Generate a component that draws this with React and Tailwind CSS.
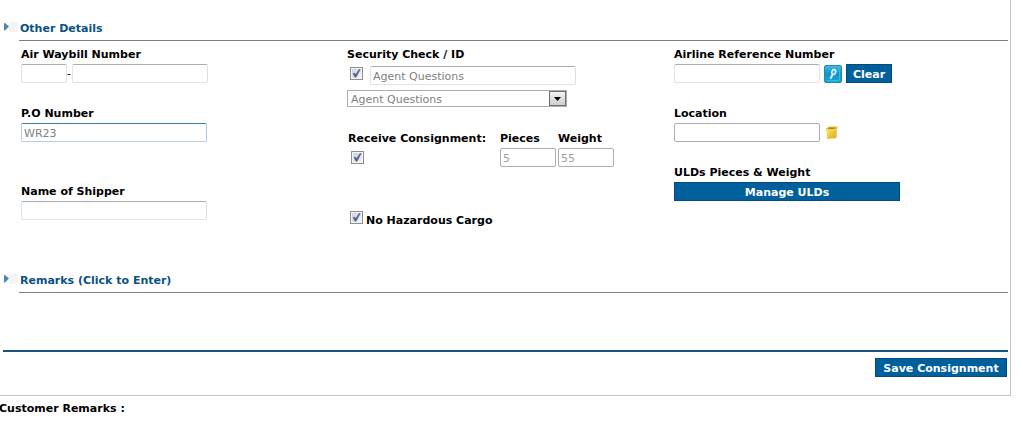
import { useState } from 'react';
import clsx from 'clsx';

function SectionHeading({ children }) {
  return (
    <h2 className="ml-[3px] mr-[2px]">
      <button type="button" className="flex w-full items-stretch text-left font-bold text-[#0b5184]">
        <span className="w-4 shrink-0 pt-[6px]">
          <svg width="16" height="10" viewBox="0 0 16 10" aria-hidden="true">
            <path d="M6 0h9v10H6z" fill="#f4f4f4" />
            <path d="M1 1h1l4 3.500-4 4H1z" fill="#4a8ab0" />
          </svg>
        </span>
        <span className="flex h-[25px] grow items-center border-b border-[#808080] pt-[2px] pl-px">{children}</span>
      </button>
    </h2>
  );
}

function TextInput({ dark, focused, className, ...props }) {
  return (
    <input
      type="text"
      className={clsx(
        'h-[19px] rounded-[2px] border bg-white px-[2px] pt-[2px] outline-none',
        dark && 'border-[#abadb3]',
        focused && 'border-[#b5cfe7] border-t-[#3d7bad] border-r-[#a4c9e3]',
        !dark && !focused && 'border-[#e2e3ea] border-t-[#abadb3] border-r-[#dbdfe6]',
        className
      )}
      {...props}
    />
  );
}

function Checkbox({ className, ...props }) {
  const [checked, setChecked] = useState(true);

  return (
    <span className={clsx('relative block h-[13px] w-[13px] shrink-0', className)}>
      <input
        type="checkbox"
        checked={checked}
        onChange={(e) => setChecked(e.target.checked)}
        className="block h-[13px] w-[13px] appearance-none border border-[#8e8f8f] bg-linear-to-br from-[#cbcfd5] to-[#f6f6f6] shadow-[inset_0_0_0_1px_#f4f4f4]"
        {...props}
      />
      {checked ? (
        <svg className="pointer-events-none absolute inset-0" width="13" height="13" viewBox="0 0 13 13" aria-hidden="true">
          <path d="M3 6.5 4.5 6l1 1.8L9 2.5h1.2L6 10.3H5z" fill="#4a5f97" stroke="#4a5f97" strokeWidth="0.5" />
        </svg>
      ) : null}
    </span>
  );
}

function Button({ className, children }) {
  return (
    <button
      type="button"
      className={clsx('flex h-[19px] items-center justify-center border border-[#004b84] bg-[#00609c] pt-[2px] font-bold text-white', className)}
    >
      {children}
    </button>
  );
}

function SearchIcon() {
  return (
    <svg width="18" height="18" viewBox="0 0 18 18" aria-hidden="true">
      <defs>
        <linearGradient id="search-bg" x1="0" y1="0" x2="0" y2="1">
          <stop offset="0" stopColor="#45bce0" />
          <stop offset="0.5" stopColor="#1293c6" />
          <stop offset="1" stopColor="#18a9d8" />
        </linearGradient>
      </defs>
      <rect x="0.5" y="0.5" width="17" height="17" rx="1.5" fill="url(#search-bg)" stroke="#2389b3" />
      <path d="M3 15.5h12M15.5 4v11" stroke="#43c5e8" strokeWidth="1" opacity="0.7" />
      <ellipse cx="9.800" cy="7" rx="2" ry="2.500" transform="rotate(20 9.800 7)" fill="#55b5d8" stroke="#e4f6fc" strokeWidth="1.300" />
      <path d="M8.300 10 6.800 13" stroke="#d5effa" strokeWidth="2" strokeLinecap="round" />
    </svg>
  );
}

function BoxIcon() {
  return (
    <svg width="12" height="13" viewBox="0 0 12 13" aria-hidden="true">
      <defs>
        <linearGradient id="box-front" x1="0" y1="0" x2="1" y2="1">
          <stop offset="0" stopColor="#f9df5c" />
          <stop offset="1" stopColor="#e0ac14" />
        </linearGradient>
      </defs>
      <path d="M0 2.5 3 .5h7L12 1v1l-2 2H1z" fill="#e6c63a" />
      <path d="M3 1.5h6.500L8.500 3H2z" fill="#a9851a" />
      <path d="M1 4h8.500v8.200L1 13z" fill="url(#box-front)" />
      <path d="M9.500 4 10.500 3v8.500l-1 .7z" fill="#cf9c12" />
      <path d="M0 3h9.500v1.500H.5z" fill="#f3d64a" />
    </svg>
  );
}

export default function App() {
  return (
    <div className="overflow-x-hidden bg-white font-['DejaVu_Sans',Verdana,sans-serif] text-[11px] leading-4 text-black">
      <form className="mr-3 border-r border-b border-[#c6c6c6] pt-4 pb-[18px]">
        <SectionHeading>Other Details</SectionHeading>

        <div className="grid min-h-[227px] grid-cols-[326fr_327fr_327fr] pt-[6px] pr-[9px] pl-[21px]">
          <div className="flex flex-col items-start">
            <label htmlFor="awb-prefix" className="mb-px font-bold">Air Waybill Number</label>
            <div className="flex items-center">
              <TextInput id="awb-prefix" className="w-[46px]" />
              <span className="w-[5px]">-</span>
              <TextInput aria-label="Air Waybill serial" className="w-[136px]" />
            </div>

            <label htmlFor="po-number" className="mt-[23px] mb-px font-bold">P.O Number</label>
            <TextInput id="po-number" focused defaultValue="WR23" className="w-[186px] text-[#808080]" />

            <label htmlFor="shipper" className="mt-[42px] mb-px font-bold">Name of Shipper</label>
            <TextInput id="shipper" className="w-[186px]" />
          </div>

          <div className="flex flex-col items-start">
            <label htmlFor="security-id" className="mb-[3px] font-bold">Security Check / ID</label>
            <div className="flex gap-[7px] pl-[3px]">
              <Checkbox aria-label="Security checked" className="mt-px" />
              <TextInput id="security-id" defaultValue="Agent Questions" className="w-[206px] text-[#808080]" />
            </div>
            <div className="relative mt-[5px] w-[220px]">
              <select
                aria-label="Security check type"
                className="block h-[17px] w-full appearance-none border border-[#abadb3] bg-white pt-px pl-[3px] leading-[15px] text-[#808080] outline-none"
              >
                <option>Agent Questions</option>
              </select>
              <span className="pointer-events-none absolute inset-y-px right-px flex w-[17px] items-center justify-center border border-[#707070] bg-linear-to-b from-[#f2f2f2] to-[#cfcfcf]">
                <svg width="7" height="4" viewBox="0 0 7 4" aria-hidden="true">
                  <path d="M0 0h7L3.500 4z" fill="#000" />
                </svg>
              </span>
            </div>

            <div className="mt-6 flex pl-px">
              <div className="w-[152px]">
                <label htmlFor="receive" className="block font-bold whitespace-nowrap">Receive Consignment:</label>
                <Checkbox id="receive" className="mt-1 ml-[3px]" />
              </div>
              <div className="mr-[2px] w-14">
                <label htmlFor="pieces" className="mb-px block font-bold">Pieces</label>
                <TextInput id="pieces" dark defaultValue="5" className="block w-full text-[#a0a0a0]" />
              </div>
              <div className="w-14">
                <label htmlFor="weight" className="mb-px block font-bold">Weight</label>
                <TextInput id="weight" dark defaultValue="55" className="block w-full text-[#a0a0a0]" />
              </div>
            </div>

            <div className="mt-[44px] flex gap-[3px] pl-[3px]">
              <Checkbox id="no-hazard" />
              <label htmlFor="no-hazard" className="pt-[2px] font-bold">No Hazardous Cargo</label>
            </div>
          </div>

          <div className="flex flex-col items-start">
            <label htmlFor="airline-ref" className="mb-px font-bold">Airline Reference Number</label>
            <div className="flex items-end gap-1">
              <TextInput id="airline-ref" className="w-[146px]" />
              <button type="button" aria-label="Search airline reference">
                <SearchIcon />
              </button>
              <Button className="w-[46px]">Clear</Button>
            </div>

            <label htmlFor="location" className="mt-[23px] mb-px font-bold">Location</label>
            <div className="flex items-center gap-[6px]">
              <TextInput id="location" dark className="w-[146px]" />
              <button type="button" aria-label="Choose location">
                <BoxIcon />
              </button>
            </div>

            <p className="mt-[23px] mb-px font-bold">ULDs Pieces &amp; Weight</p>
            <Button className="w-[226px]">Manage ULDs</Button>
          </div>
        </div>

        <SectionHeading>Remarks (Click to Enter)</SectionHeading>

        <div className="mt-[57px] mr-[2px] ml-[3px] flex justify-end border-t-2 border-[#155580] pt-[6px] pr-px">
          <Button className="w-[132px]">Save Consignment</Button>
        </div>
      </form>

      <p className="-ml-px pt-[5px] font-bold">Customer Remarks :</p>
    </div>
  );
}
